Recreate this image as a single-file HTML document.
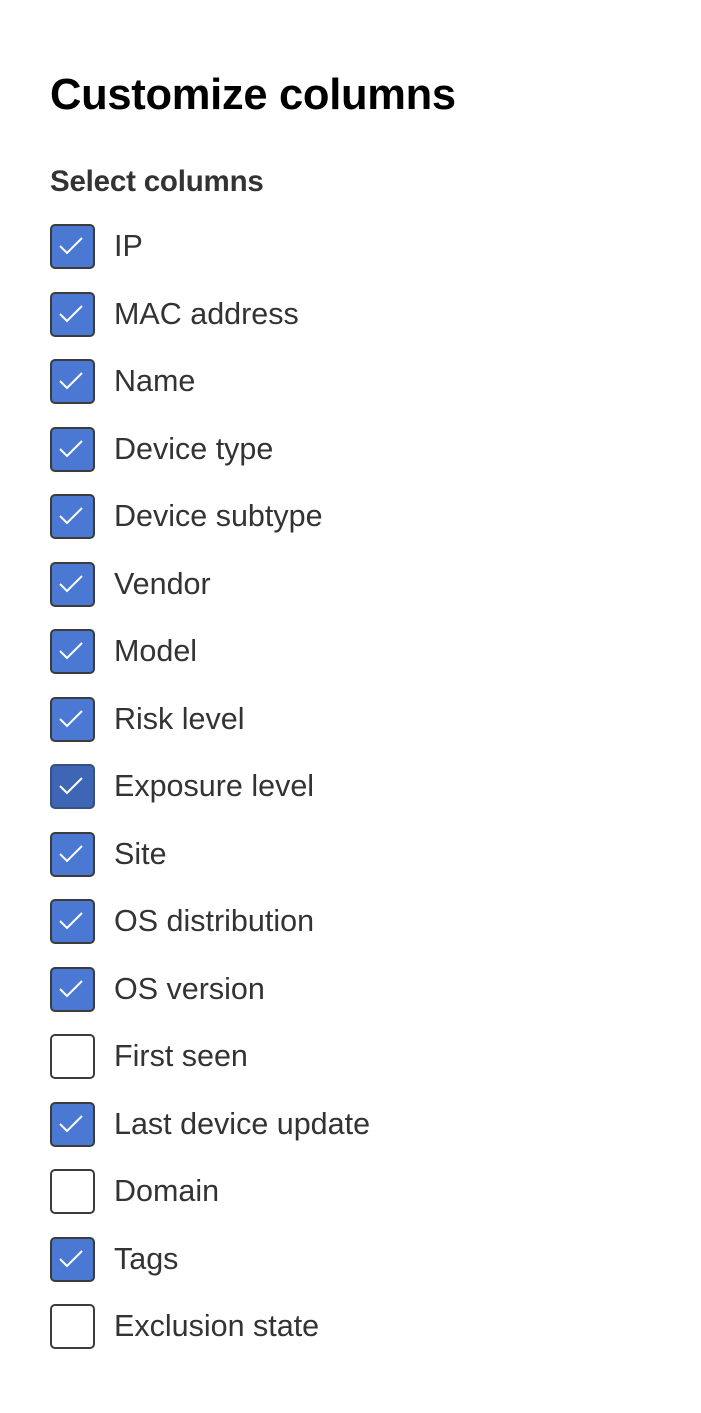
<!DOCTYPE html>
<html><head><meta charset="utf-8"><style>
body{margin:0;width:701px;height:1413px;background:#fff;font-family:"Segoe UI","Liberation Sans",sans-serif;position:relative;overflow:hidden}
h1{position:absolute;left:50px;top:67px;margin:0;font-size:43.5px;font-weight:bold;color:#000;line-height:56px;letter-spacing:-0.3px}
.sub{position:absolute;left:50px;top:163px;font-size:29.5px;font-weight:bold;color:#333;line-height:38px;letter-spacing:-0.2px}
.row{position:absolute;left:50px;height:46px;width:600px}
.box{position:absolute;left:0;top:0;width:41px;height:41px;border:2px solid #3c3c3c;border-radius:5px;background:#fff}
.box.on{background:#4a78d3}
.box.hov{background:#3f66b4;border-color:#36507f}
.box svg{position:absolute;left:-2px;top:-2px}
.lbl{position:absolute;left:64px;top:0;line-height:45px;font-size:30.5px;color:#333}
</style></head><body>
<h1>Customize columns</h1>
<div class="sub">Select columns</div>
<div class="row" style="top:224px"><div class="box on"><svg width="45" height="45"><path d="M10 22 L17 29 L32 14" stroke="#fff" stroke-width="2" fill="none"/></svg></div><div class="lbl">IP</div></div>
<div class="row" style="top:291.5px"><div class="box on"><svg width="45" height="45"><path d="M10 22 L17 29 L32 14" stroke="#fff" stroke-width="2" fill="none"/></svg></div><div class="lbl">MAC address</div></div>
<div class="row" style="top:359px"><div class="box on"><svg width="45" height="45"><path d="M10 22 L17 29 L32 14" stroke="#fff" stroke-width="2" fill="none"/></svg></div><div class="lbl">Name</div></div>
<div class="row" style="top:426.5px"><div class="box on"><svg width="45" height="45"><path d="M10 22 L17 29 L32 14" stroke="#fff" stroke-width="2" fill="none"/></svg></div><div class="lbl">Device type</div></div>
<div class="row" style="top:494px"><div class="box on"><svg width="45" height="45"><path d="M10 22 L17 29 L32 14" stroke="#fff" stroke-width="2" fill="none"/></svg></div><div class="lbl">Device subtype</div></div>
<div class="row" style="top:561.5px"><div class="box on"><svg width="45" height="45"><path d="M10 22 L17 29 L32 14" stroke="#fff" stroke-width="2" fill="none"/></svg></div><div class="lbl">Vendor</div></div>
<div class="row" style="top:629px"><div class="box on"><svg width="45" height="45"><path d="M10 22 L17 29 L32 14" stroke="#fff" stroke-width="2" fill="none"/></svg></div><div class="lbl">Model</div></div>
<div class="row" style="top:696.5px"><div class="box on"><svg width="45" height="45"><path d="M10 22 L17 29 L32 14" stroke="#fff" stroke-width="2" fill="none"/></svg></div><div class="lbl">Risk level</div></div>
<div class="row" style="top:764px"><div class="box hov"><svg width="45" height="45"><path d="M10 22 L17 29 L32 14" stroke="#fff" stroke-width="2" fill="none"/></svg></div><div class="lbl">Exposure level</div></div>
<div class="row" style="top:831.5px"><div class="box on"><svg width="45" height="45"><path d="M10 22 L17 29 L32 14" stroke="#fff" stroke-width="2" fill="none"/></svg></div><div class="lbl">Site</div></div>
<div class="row" style="top:899px"><div class="box on"><svg width="45" height="45"><path d="M10 22 L17 29 L32 14" stroke="#fff" stroke-width="2" fill="none"/></svg></div><div class="lbl">OS distribution</div></div>
<div class="row" style="top:966.5px"><div class="box on"><svg width="45" height="45"><path d="M10 22 L17 29 L32 14" stroke="#fff" stroke-width="2" fill="none"/></svg></div><div class="lbl">OS version</div></div>
<div class="row" style="top:1034px"><div class="box"></div><div class="lbl">First seen</div></div>
<div class="row" style="top:1101.5px"><div class="box on"><svg width="45" height="45"><path d="M10 22 L17 29 L32 14" stroke="#fff" stroke-width="2" fill="none"/></svg></div><div class="lbl">Last device update</div></div>
<div class="row" style="top:1169px"><div class="box"></div><div class="lbl">Domain</div></div>
<div class="row" style="top:1236.5px"><div class="box on"><svg width="45" height="45"><path d="M10 22 L17 29 L32 14" stroke="#fff" stroke-width="2" fill="none"/></svg></div><div class="lbl">Tags</div></div>
<div class="row" style="top:1304px"><div class="box"></div><div class="lbl">Exclusion state</div></div>
</body></html>
